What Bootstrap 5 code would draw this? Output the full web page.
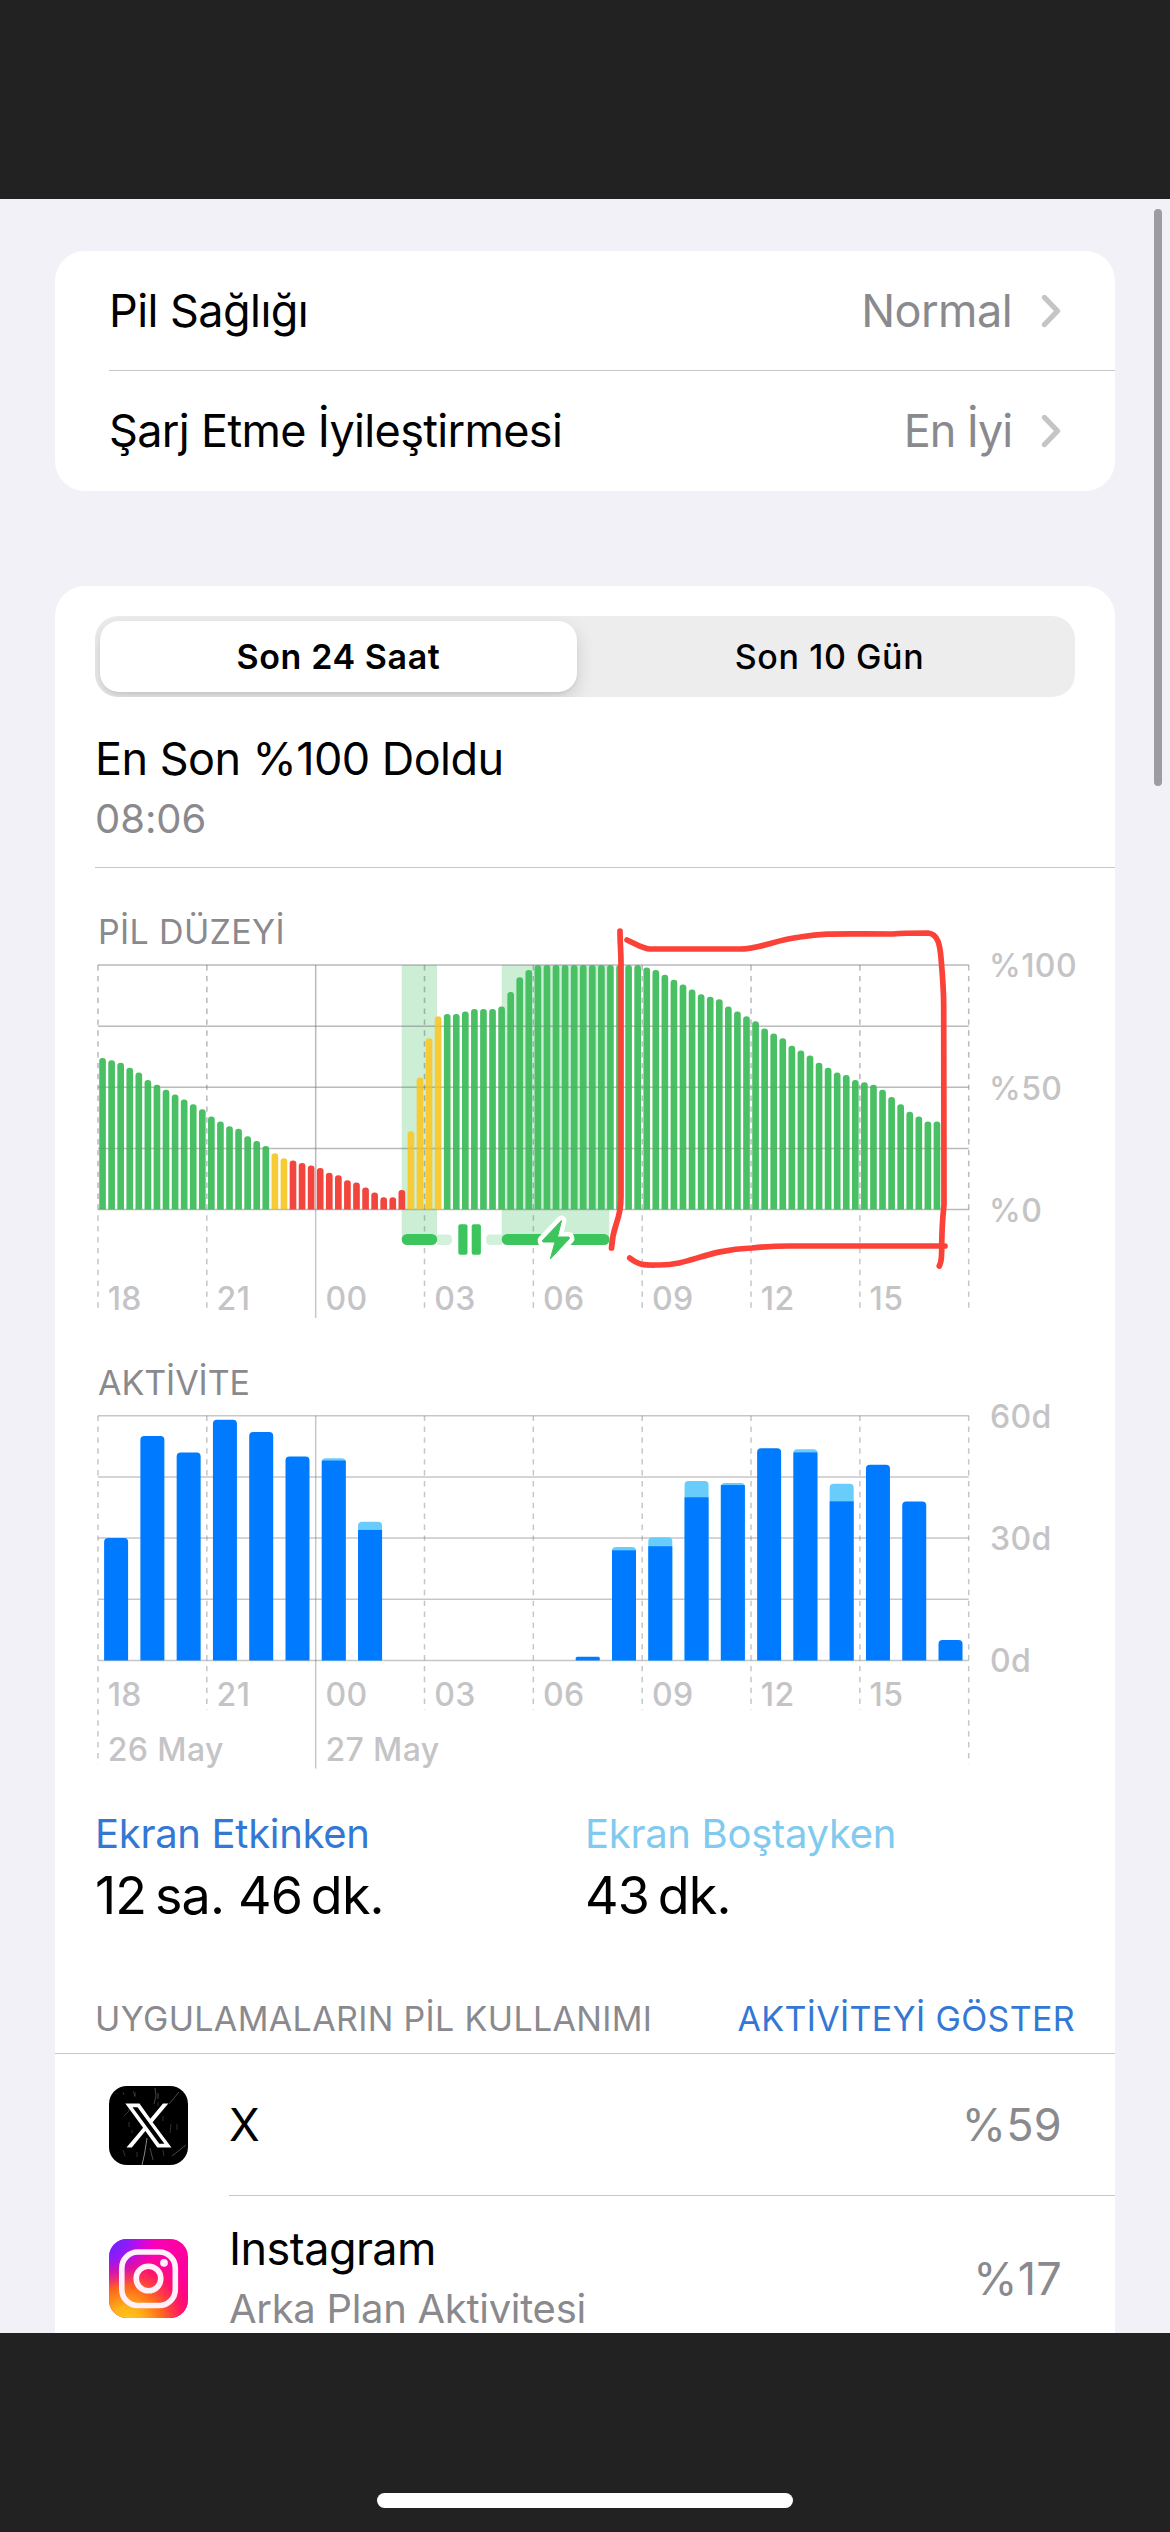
<!DOCTYPE html>
<html lang="tr">
<head>
<meta charset="utf-8">
<meta name="viewport" content="width=device-width, initial-scale=1">
<title>Pil</title>
<link href="https://cdn.jsdelivr.net/npm/bootstrap@5.3.0/dist/css/bootstrap.min.css" rel="stylesheet">
<style>
  body { background: #222; font-family: Inter, "Noto Sans", sans-serif; color: #000; }
  .phone { width: 1170px; height: 2532px; padding-top: 199px; background: #222; }
  .screen { height: 2134px; background: #f2f1f7; padding: 52px 55px 0; }
  .panel { border: 0; border-radius: 30px; color: #000; background: #fff; }
  .panel-usage { margin-top: 95px; height: 1840px; border-radius: 30px 30px 0 0; }
  .setting { margin-left: 54px; padding-right: 54px; height: 120px; }
  .hairline { border-bottom: 1px solid #c6c6c8 !important; }
  .t45 { font-size: 45px; line-height: 54px; letter-spacing: -.55px; }
  .t40 { font-size: 40px; line-height: 54px; letter-spacing: -.3px; }
  .t34 { font-size: 34px; line-height: 40px; letter-spacing: .35px; }
  .t52 { font-size: 52px; line-height: 60px; letter-spacing: -.8px; margin-top: 5px; }
  .ls-wide { letter-spacing: -.66px; }
  .ls-iyi { letter-spacing: -1.1px; }
  .ls-pct { letter-spacing: .3px; }
  .ls-flat { letter-spacing: -.05px; }
  .sub { margin-top: 6px; }
  .muted { color: #8a8a8e; }
  .blue { color: #3278d4; }
  .sky { color: #7fcaee; }
  .chev { width: 20px; height: 34px; margin-left: 29px; }
  .segments { margin: 30px 40px 0; height: 81px; padding: 5px; border-radius: 23px; background: #ededee; overflow: hidden; }
  .segments .seg { font-size: 34px; line-height: 71px; letter-spacing: .6px; border-radius: 19px; text-align: center; font-weight: 500; padding-left: 12px; }
  .segments .seg.active { width: 477px; flex: none; font-weight: 600; padding-left: 0; background: #fff; box-shadow: 0 7px 18px rgba(0,0,0,.14), 0 2px 3px rgba(0,0,0,.05); }
  .charge { margin: 35px 0 0 40px; padding-bottom: 21px; }
  .sect { padding: 44px 0 0 43px; }
  .chart { display: block; width: 1060px; overflow: visible; }
  .chart text { font: 500 32px Inter, "Noto Sans", sans-serif; fill: #c4c4c6; letter-spacing: .4px; }
  .legend-row { padding: 0 40px; }
  .apps-head { margin-top: 73px; padding: 0 40px 14px 40px; }
  .app-row { padding-left: 54px; height: 142px; }
  .app-body { margin-left: 41px; padding-right: 53px; height: 142px; }
  .app-icon { width: 79px; height: 79px; flex: none; }
  .app-row.tall, .tall .app-body { height: 165px; }
  .clip { overflow: hidden; }
  .scroll-thumb { position: absolute; left: 1154px; top: 209px; width: 8px; height: 577px; border-radius: 4px; background: #9c9ca1; }
  .home-bar { width: 416px; height: 15px; border-radius: 8px; margin: 160px auto 0; background: #fff; }
  .scribble { position: absolute; left: 0; top: 900px; width: 1170px; height: 400px; pointer-events: none; }
</style>
<script src="https://cdn.jsdelivr.net/npm/bootstrap@5.3.0/dist/js/bootstrap.bundle.min.js"></script>
</head>
<body>
<div class="phone position-relative overflow-hidden">
  <main class="screen clip">
    <section class="card panel">
      <div class="setting hairline d-flex align-items-center">
        <span class="t45">Pil Sağlığı</span>
        <span class="t45 muted ms-auto">Normal</span>
        <svg class="chev" viewBox="0 0 20 34"><path d="M3.5 3.5 16.5 17 3.5 30.5" fill="none" stroke="#c5c5c7" stroke-width="5.4" stroke-linecap="round" stroke-linejoin="round"/></svg>
      </div>
      <div class="setting d-flex align-items-center">
        <span class="t45 ls-wide">Şarj Etme İyileştirmesi</span>
        <span class="t45 ls-iyi muted ms-auto">En İyi</span>
        <svg class="chev" viewBox="0 0 20 34"><path d="M3.5 3.5 16.5 17 3.5 30.5" fill="none" stroke="#c5c5c7" stroke-width="5.4" stroke-linecap="round" stroke-linejoin="round"/></svg>
      </div>
    </section>

    <section class="card panel panel-usage">
      <div class="segments d-flex">
        <div class="seg active">Son 24 Saat</div>
        <div class="seg flex-fill">Son 10 Gün</div>
      </div>
      <div class="charge hairline">
        <div class="t45">En Son %100 Doldu</div>
        <div class="t40 ls-flat muted sub">08:06</div>
      </div>

      <div class="sect t34 muted">PİL DÜZEYİ</div>
      <svg class="chart" id="level" viewBox="55 952 1060 411" height="411"></svg>

      <div class="sect pt-0 t34 ls-flat muted">AKTİVİTE</div>
      <svg class="chart" id="activity" viewBox="55 1403 1060 404" height="404"></svg>

      <div class="legend-row row g-0">
        <div class="col-6">
          <div class="t40 blue">Ekran Etkinken</div>
          <div class="t52">12&#8201;sa. 46&#8201;dk.</div>
        </div>
        <div class="col-6">
          <div class="t40 sky">Ekran Boştayken</div>
          <div class="t52">43&#8201;dk.</div>
        </div>
      </div>

      <div class="apps-head hairline d-flex justify-content-between">
        <span class="t34 muted">UYGULAMALARIN PİL KULLANIMI</span>
        <span class="t34 blue">AKTİVİTEYİ GÖSTER</span>
      </div>

      <div class="app-row d-flex align-items-center">
        <svg class="app-icon" viewBox="0 0 79 79">
          <rect width="79" height="79" rx="18" fill="#000"/>
          <g stroke="#fff" fill="none" stroke-width=".7">
            <path d="M38 52 35.5 68 33 79" opacity=".75"/>
            <path d="M46 2 47 10 45 18M49 7v6M60 18 70 6M41 62l3 12M63 70 77 59" opacity=".4"/>
            <path d="M14 6l1 3M26 6v5M24 5l2 5M20 36v5M23 44v3M15 30q6-4 6-10M54 64l1 6M62 38l-1 9M54 30v5M14 64l2 6M28 66v5M68 38v6M49 16v4" opacity=".28"/>
          </g>
          <path fill="#fff" fill-rule="evenodd" d="M16.300 17.500H30.500L41.300 32.700 54 17.500H59.300L43.600 36.200 62.500 61.500H48.300L36.400 45 22.800 61.500H17.500L34.100 41.700ZM23.500 21.200 50.300 57.700H55.400L28.500 21.200Z"/>
        </svg>
        <div class="app-body hairline d-flex align-items-center flex-fill">
          <span class="t45">X</span>
          <span class="t45 ls-pct muted ms-auto">%59</span>
        </div>
      </div>
      <div class="app-row tall d-flex align-items-center">
        <svg class="app-icon" viewBox="0 0 79 79">
          <defs>
            <linearGradient id="igBase" x1="0" y1="0" x2="1" y2="0"><stop offset="0" stop-color="#e000e8"/><stop offset=".55" stop-color="#fc00b8"/><stop offset="1" stop-color="#ff0098"/></linearGradient>
            <radialGradient id="igViolet" cx="0" cy="0" r=".62"><stop offset="0" stop-color="#5a2bff"/><stop offset=".45" stop-color="#8a1cff" stop-opacity=".85"/><stop offset="1" stop-color="#d000f0" stop-opacity="0"/></radialGradient>
            <radialGradient id="igWarm" cx=".22" cy="1.08" r="1.02"><stop offset="0" stop-color="#ffd01c"/><stop offset=".22" stop-color="#ffb018"/><stop offset=".45" stop-color="#ff6a1c"/><stop offset=".72" stop-color="#ff1560" stop-opacity=".85"/><stop offset="1" stop-color="#ff0098" stop-opacity="0"/></radialGradient>
          </defs>
          <rect width="79" height="79" rx="18" fill="url(#igBase)"/>
          <rect width="79" height="79" rx="18" fill="url(#igWarm)"/>
          <rect width="79" height="79" rx="18" fill="url(#igViolet)"/>
          <g fill="none" stroke="#fff0fa" stroke-width="5.600">
            <rect x="12.800" y="13" width="53.500" height="53.500" rx="16"/>
            <circle cx="39.500" cy="39.500" r="12.300"/>
          </g>
          <circle cx="55" cy="23.800" r="3.900" fill="#fff0fa"/>
        </svg>
        <div class="app-body d-flex align-items-center flex-fill">
          <div>
            <div class="t45">Instagram</div>
            <div class="t40 muted sub">Arka Plan Aktivitesi</div>
          </div>
          <span class="t45 ls-pct muted ms-auto">%17</span>
        </div>
      </div>
    </section>
  </main>
  <div class="home-bar"></div>
  <div class="scroll-thumb"></div>

  <!-- hand-drawn marker over the battery chart -->
  <svg class="scribble" viewBox="0 900 1170 400" fill="none" stroke="#fb4238" stroke-width="5.700" stroke-linecap="round" stroke-linejoin="round">
    <path d="M620 931C620 945 621 950 621 963L621 1197C621 1222 613 1222 611.500 1248"/>
    <path d="M627 940C636 944 643 949 650 949L740 949C760 949 775 940 800 937C826 933 833 934 893 934C903 933 915 933 928 933C938 934 940 945 941 958C943 980 943.700 990 943.700 1007L944 1205C942.500 1220 941.700 1225 941.700 1250C941.700 1260 941 1263 939.300 1266"/>
    <path d="M629.700 1258C640 1266 645 1265 660 1265C690 1265 705 1250 752 1248C770 1246 775 1246 790 1246L945 1246"/>
  </svg>
</div>

<script>
const LEFT = 98, RIGHT = 968.7, STEP = (RIGHT - LEFT) / 8;
const line = (x1, y1, x2, y2, extra = '') =>
  `<line x1="${x1}" y1="${y1}" x2="${x2}" y2="${y2}" stroke="#6a6a70" stroke-opacity=".38" stroke-width="1.500" ${extra}/>`;
const text = (x, y, s) => `<text x="${x}" y="${y}">${s}</text>`;
const bar = (x, w, top, bottom, r, fill) =>
  `<path d="M${x} ${bottom}V${top + r}q0 ${-r} ${r} ${-r}H${x + w - r}q${r} 0 ${r} ${r}V${bottom}z" fill="${fill}"/>`;
const HOURS = ['18', '21', '00', '03', '06', '09', '12', '15'];

function grid(top, bottom, ends) {
  let s = '';
  for (let i = 0; i < 5; i++) {
    const y = top + (bottom - top) * i / 4;
    s += line(LEFT, y, RIGHT, y);
  }
  for (let i = 0; i < 9; i++) {
    const x = LEFT + STEP * i;
    s += i === 2 ? line(x, top, x, ends.solid)
      : line(x, top, x, i % 8 ? ends.inner : ends.outer, 'stroke-dasharray="5.400 5.480"');
  }
  return s;
}
const hours = y => HOURS.map((h, i) => text(LEFT + STEP * i + 9.7, y, h)).join('');

/* battery level, one value per quarter hour */
const LEVEL = [62,61,60,58,56,53,51,49,47,45,43,41,38,36,34,33,30,28,26,23,21,20,19,18,17,15,14,12,11,9,7,5,5,8,
  32,54,70,79,80,80,81,82,82,82,83,89,95,98,100,100,100,100,100,100,100,100,100,100,100,100,99,98,96,94,92,90,88,87,86,83,81,
  79,77,74,72,70,67,65,63,60,58,56,55,53,52,51,49,46,43,40,38,36,36];
(() => {
  const top = 965, bottom = 1209.5, w = (RIGHT - LEFT) / 96;
  let s = `<path d="M401.700 965H437V1240H401.700zM501.700 965H609.300V1240H501.700z" fill="#cceed5"/>`;
  s += grid(top, bottom, {inner: 1313, outer: 1313, solid: 1318});
  LEVEL.forEach((v, i) => {
    const fill = (i > 18 && i < 21) || (i > 33 && i < 38) ? '#f6cb35' : i > 20 && i < 34 ? '#f2453d' : '#48c063';
    s += bar(LEFT + w * i + 1.2, w - 2.4, bottom - (bottom - top) * v / 100, bottom, 3.1, fill);
  });
  s += `<g opacity=".3">${grid(top, bottom, {inner: bottom, outer: bottom, solid: bottom})}</g>` + hours(1309.5);
  s += `<path d="M437 1234.500h11q4 0 4 5.200t-4 5.200h-11zM502 1234.500h-12q-4 0-4 5.200t4 5.200h12z" fill="#d2f1da"/>
    <rect x="401.700" y="1234" width="35.500" height="11" rx="5.500" fill="#3cc55c"/>
    <rect x="501.700" y="1234" width="107.800" height="11" rx="5.500" fill="#3cc55c"/>
    <rect x="458.300" y="1224.300" width="9.200" height="30.500" rx="2" fill="#3cc55c"/>
    <rect x="471.700" y="1224.300" width="9.200" height="30.500" rx="2" fill="#3cc55c"/>
    <path d="M561.500 1220.500 542.500 1240.500 543 1242H555L550.300 1259 569.500 1238.500 569 1237H557.500z" fill="#fff" stroke="#fff" stroke-width="10" stroke-linejoin="round"/>
    <path d="M561.500 1220.500 542.500 1240.500 543 1242H555L550.300 1259 569.500 1238.500 569 1237H557.500z" fill="#3cc55c" stroke="#3cc55c" stroke-width="1" stroke-linejoin="round"/>`;
  s += text(989, 977, '%100') + text(989, 1099.5, '%50') + text(989, 1221.5, '%0');
  level.innerHTML = s;
})();

/* minutes per hour: [screen on, screen off] */
const ACTIVITY = [[30,0],[55,0],[51,0],[59,0],[56,0],[50,0],[49,.6],[32,2],[0,0],[0,0],[0,0],[0,0],[0,0],[.9,0],
  [27,.8],[28,2.2],[40,4],[43,.5],[52,0],[51,.8],[39,4.3],[48,0],[39,0],[5,0]];
(() => {
  const top = 1415.7, bottom = 1660.5, w = (RIGHT - LEFT) / 24, k = (bottom - top) / 60;
  let s = grid(top, bottom, {inner: 1710, outer: 1764, solid: 1768.5});
  ACTIVITY.forEach(([on, off], i) => {
    if (!on) return;
    const x = LEFT + w * i + 6.1, r = on < 1 ? 1.5 : 4;
    s += bar(x, 24, bottom - k * (on + off), bottom, r, off ? '#68cdfb' : '#007aff');
    if (off) s += `<rect x="${x}" y="${bottom - k * on}" width="24" height="${k * on}" fill="#007aff"/>`;
  });
  s += hours(1705.5);
  s += text(LEFT + 9.7, 1760.5, '26 May') + text(LEFT + 2 * STEP + 9.7, 1760.5, '27 May');
  s += text(990, 1427.5, '60d') + text(990, 1550, '30d') + text(990, 1672, '0d');
  activity.innerHTML = s;
})();
</script>
</body>
</html>
